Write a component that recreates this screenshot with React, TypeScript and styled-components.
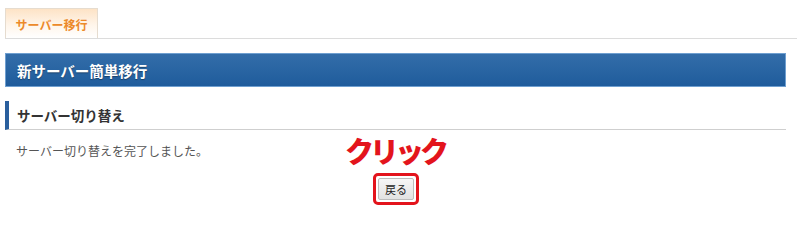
import React from "react";
import styled, { createGlobalStyle } from "styled-components";

const Global = createGlobalStyle`
  html, body { margin: 0; padding: 0; background: #fff; }
  body { font-family: "Noto Sans CJK JP", "Noto Sans", sans-serif; }
`;

const Page = styled.div`
  position: relative;
  padding: 8px 3px 0 5px;
  width: 800px;
  height: 217px;
  box-sizing: border-box;
  overflow: hidden;
`;

const TabBar = styled.div`
  display: flex;
  border-bottom: 1px solid #dcdcdc;
`;

const Tab = styled.div`
  width: 93px;
  height: 30px;
  box-sizing: border-box;
  border: 1px solid #e6dccf;
  border-bottom: none;
  background: linear-gradient(#fde3c6, #fff5ea 55%, #ffffff);
  color: #ec8a2a;
  font-size: 12px;
  font-weight: bold;
  display: flex;
  align-items: center;
  justify-content: center;
  padding-top: 1px;
`;

const Main = styled.div`
  margin-right: 11px;
`;

const TitleBar = styled.div`
  margin-top: 14px;
  height: 34px;
  box-sizing: border-box;
  border: 1px solid #6f9fd0;
  background: linear-gradient(#336da9, #1f5c9c);
  color: #fff;
  font-size: 14.5px;
  font-weight: bold;
  display: flex;
  align-items: center;
  padding-left: 11px;
  text-shadow: 0 1px 1px rgba(0, 0, 0, 0.35);
`;

const SectionHead = styled.div`
  margin-top: 14px;
  height: 29px;
  box-sizing: border-box;
  border-left: 4px solid #2a5f9d;
  border-bottom: 1px solid #cfcfcf;
  color: #333;
  font-size: 13.5px;
  font-weight: bold;
  display: flex;
  align-items: center;
  padding-left: 8px;
`;

const Message = styled.p`
  margin: 12px 0 0 11px;
  font-size: 12px;
  line-height: 18px;
  color: #555;
`;

const ButtonRow = styled.div`
  display: flex;
  justify-content: center;
  margin-top: 13px;
  padding-left: 1px;
`;

const Highlight = styled.div`
  border: 3px solid #e3141c;
  border-radius: 5px;
  padding: 2px;
  display: flex;
`;

const BackButton = styled.button`
  font-family: "Noto Sans CJK JP", sans-serif;
  font-size: 11px;
  color: #222;
  background: linear-gradient(#f6f6f6, #e2e2e2);
  border: 1px solid #bdbdbd;
  border-radius: 2px;
  height: 22px;
  padding: 0 6px;
  line-height: 20px;
  cursor: pointer;
`;

const ClickLabel = styled.div`
  position: absolute;
  left: 345px;
  top: 130px;
  font-size: 29px;
  font-weight: 900;
  color: #e3141c;
  letter-spacing: -4px;
  line-height: 40px;
`;

export default function App() {
  return (
    <>
      <Global />
      <Page>
        <TabBar>
          <Tab>サーバー移行</Tab>
        </TabBar>
        <Main>
          <TitleBar>新サーバー簡単移行</TitleBar>
          <SectionHead>サーバー切り替え</SectionHead>
          <Message>サーバー切り替えを完了しました。</Message>
          <ButtonRow>
            <Highlight>
              <BackButton>戻る</BackButton>
            </Highlight>
          </ButtonRow>
        </Main>
        <ClickLabel>クリック</ClickLabel>
      </Page>
    </>
  );
}
